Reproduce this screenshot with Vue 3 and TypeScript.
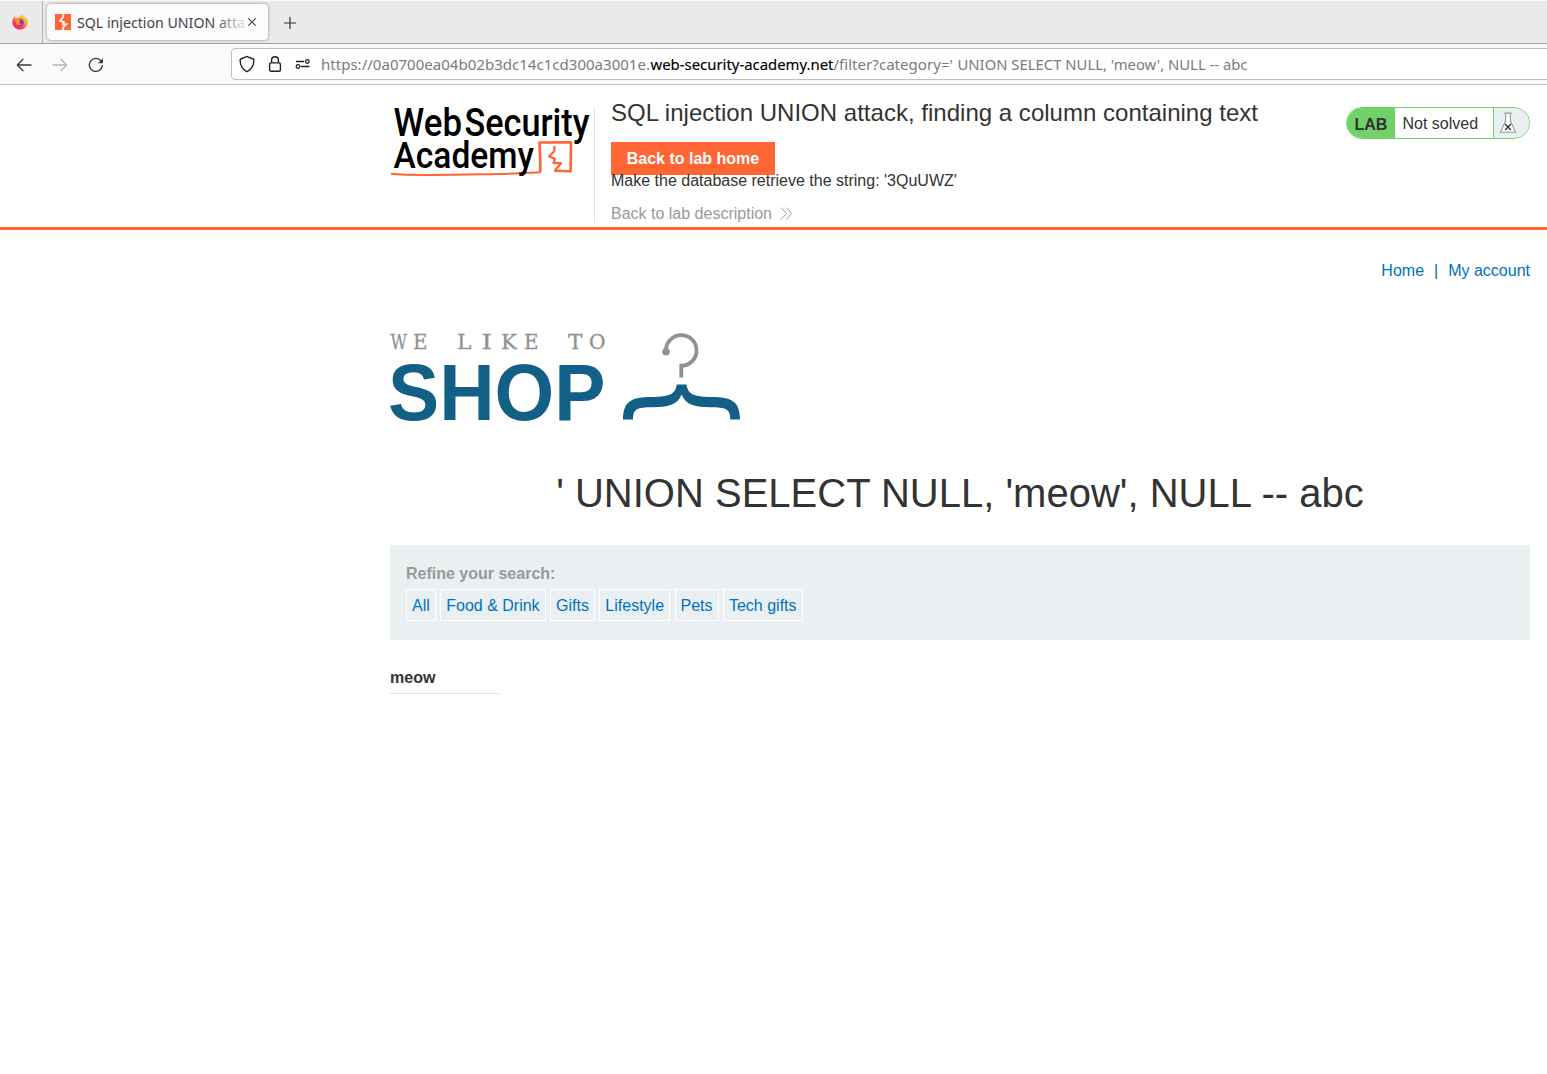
<script setup lang="ts">
interface Glyph { ch: string; x: number; w: number }

const categories: string[] = ['All', 'Food & Drink', 'Gifts', 'Lifestyle', 'Pets', 'Tech gifts']
const payload = "' UNION SELECT NULL, 'meow', NULL -- abc"
const tagline: Glyph[] = [
  { ch: 'W', x: 0.5, w: 16.5 },
  { ch: 'E', x: 23, w: 14.5 },
  { ch: 'L', x: 67, w: 14.5 },
  { ch: 'I', x: 91.5, w: 10.5 },
  { ch: 'K', x: 111, w: 16 },
  { ch: 'E', x: 134, w: 14.5 },
  { ch: 'T', x: 178, w: 14.5 },
  { ch: 'O', x: 199, w: 16.5 },
]
</script>

<template>
  <div class="window">
    <div class="tabbar">
      <div class="pinned">
        <svg width="16" height="16" viewBox="0 0 16 16">
          <defs>
            <linearGradient id="fox" x1="0.85" y1="0.05" x2="0.2" y2="0.95">
              <stop offset="0" stop-color="#ffe53b" />
              <stop offset="0.4" stop-color="#ff9a2b" />
              <stop offset="0.7" stop-color="#ff4050" />
              <stop offset="1" stop-color="#e6238c" />
            </linearGradient>
          </defs>
          <path d="M10.3.2c.2 1.3 1 2.200 1.700 2.900C13.200 3.700 13.500 3 13.500 3c1.500 1.600 2.300 3.500 2.200 5.500a7.700 7.200 0 0 1-15.400 0C.2 6.600.8 5 1.700 4l.4-1.800L4 4.200c.8-.4 2-.4 2.600-.2C7.500 2.500 8.900 1.100 10.300.2z" fill="url(#fox)" />
          <circle cx="8.200" cy="8.500" r="3.500" fill="#7a35d8" />
          <path d="M3.200 5.200c1.600-.8 3.500-.5 4.500.7.900.2 1.400.4 1.300.9-.3.800-1.500.9-2 1.500.1 1.300 1.700 1.900 3 1.300-1 1.900-4.600 2.200-6-.2z" fill="#ff8a22" />
        </svg>
      </div>
      <div class="tab">
        <svg class="favicon" width="16" height="16" viewBox="0 0 16 16">
          <rect width="16" height="16" fill="#ff6633" />
          <path d="M8.400 0 8 3.200 5 6.900 9 8.100 8 10.300 11.300 10.200 8 13.600V16" fill="none" stroke="#fff" stroke-width="1.700" />
        </svg>
        <svg class="tabtitle" width="170" height="24" viewBox="0 0 170 24">
          <defs>
            <linearGradient id="fade" x1="0" x2="1">
              <stop offset="0.81" stop-color="#3f3f46" />
              <stop offset="1" stop-color="#3f3f46" stop-opacity="0.12" />
            </linearGradient>
          </defs>
          <text x="0" y="17" textLength="168" lengthAdjust="spacingAndGlyphs" fill="url(#fade)">SQL injection UNION atta</text>
        </svg>
        <svg class="close" width="8" height="8" viewBox="0 0 8 8"><path d="M.3.3l7.400 7.400M7.700.3L.3 7.700" stroke="#444" stroke-width="1.100" /></svg>
      </div>
      <svg class="plus" width="12" height="12" viewBox="0 0 12 12"><path d="M6 0v12M0 6h12" stroke="#333" stroke-width="1.200" /></svg>
    </div>

    <div class="toolbar">
      <svg width="16" height="16" viewBox="0 0 16 16" class="nav"><path d="M15 8H1.500M7 2.300 1.300 8 7 13.700" fill="none" stroke="#3b3b3f" stroke-width="1.300" stroke-linecap="round" stroke-linejoin="round" /></svg>
      <svg width="16" height="16" viewBox="0 0 16 16" class="nav"><path d="M1 8h13.500M9 2.300 14.700 8 9 13.700" fill="none" stroke="#b5b5b8" stroke-width="1.300" stroke-linecap="round" stroke-linejoin="round" /></svg>
      <svg width="16" height="16" viewBox="0 0 16 16" class="nav"><path d="M14.300 8.600A6.500 6.500 0 1 1 12.600 3.500" fill="none" stroke="#3b3b3f" stroke-width="1.300" stroke-linecap="round" /><path d="M15 1.200V6.300H9.900z" fill="#3b3b3f" /></svg>
      <div class="urlbox">
        <svg width="16" height="18" viewBox="0 0 16 18"><path d="M8 1.500c.4 0 .7.100 1 .3L14.200 4c.5.200.7.600.7 1.100-.1 4.500-1.700 8.900-6.300 11.200-.4.200-.8.200-1.200 0C2.800 14 1.200 9.600 1.100 5.100c0-.5.200-.9.700-1.100L7 1.800c.3-.2.600-.3 1-.3z" fill="none" stroke="#222226" stroke-width="1.400" /></svg>
        <svg width="14" height="18" viewBox="0 0 14 18"><rect x="1.600" y="7.900" width="10.800" height="8.300" rx="1.500" fill="none" stroke="#222226" stroke-width="1.400" /><path d="M3.600 7.800V5.200a3.400 3.400 0 0 1 6.800 0v2.600" fill="none" stroke="#222226" stroke-width="1.400" /></svg>
        <svg width="16" height="12" viewBox="0 0 16 12"><g fill="none" stroke="#222226" stroke-width="1.300"><path d="M1 3.500h8M6 8.500h8.500" /><circle cx="12.300" cy="3.500" r="1.800" /><circle cx="3" cy="8.500" r="1.800" /></g></svg>
        <svg class="address" width="930" height="24" viewBox="0 0 930 24">
          <text x="0" y="18" textLength="329" lengthAdjust="spacingAndGlyphs" fill="#7b7b7b">https://0a0700ea04b02b3dc14c1cd300a3001e.</text>
          <text x="329.500" y="18" textLength="183" lengthAdjust="spacingAndGlyphs" fill="#000" stroke="#000" stroke-width=".15">web-security-academy.net</text>
          <text x="512.500" y="18" textLength="119.500" lengthAdjust="spacingAndGlyphs" fill="#7b7b7b">/filter?category='</text>
          <text x="636.500" y="18" textLength="290" lengthAdjust="spacingAndGlyphs" fill="#7b7b7b">UNION SELECT NULL, 'meow', NULL -- abc</text>
        </svg>
      </div>
    </div>

    <header class="lab">
      <svg class="academy" width="204" height="80" viewBox="0 0 204 80">
        <g font-size="38" font-weight="500" fill="#000">
          <text x="3.500" y="36" textLength="68.500" lengthAdjust="spacingAndGlyphs">Web</text>
          <text x="74.500" y="36" textLength="125" lengthAdjust="spacingAndGlyphs">Security</text>
        </g>
        <g fill="none" stroke="#ff6633" stroke-linejoin="round">
          <path d="M1 73.800C20 76 60 75 100 74.200S138 72.500 150.500 72.300" stroke-width="2" />
          <path d="M150.300 72.500C150.500 62 150 52 149.400 42.500L181 42.300 180.600 71.200 164 70.800" stroke-width="2.600" />
          <path d="M164.500 46 164.300 51.300 159 56.500 165 58.700 163.500 63.200 171 63.200 164.500 70.800" stroke-width="2.200" />
        </g>
        <text x="3.500" y="68" font-size="37.500" font-weight="500" textLength="140.500" lengthAdjust="spacingAndGlyphs">Academy</text>
      </svg>
      <div class="intro">
        <h2>SQL injection UNION attack, finding a column containing text</h2>
        <a class="home">Back to lab home</a>
        <p>Make the database retrieve the string: '3QuUWZ'</p>
        <a class="desc">Back to lab description
          <svg width="13" height="14" viewBox="0 0 13 14"><path d="M1 .5l5.500 6L1 12.500M6.300.5l5.500 6-5.500 6" fill="none" stroke="#999" stroke-width="1" /></svg>
        </a>
      </div>
      <div class="status">
        <b>LAB</b>
        <span>Not solved</span>
        <i>
          <svg width="18" height="22" viewBox="0 0 18 22"><path d="M6.600 1.500V9L1.500 20.300h15L11.400 9V1.500" fill="#fff" stroke="#999" stroke-width="1.100" /><path d="M5.200 1.200h7.600" stroke="#999" stroke-width="1.300" /><path d="M6.100 12l5.800 6M11.900 12l-5.800 6" stroke="#333" stroke-width="1.400" /></svg>
        </i>
      </div>
    </header>

    <main>
      <nav><a>Home</a><span>|</span><a>My account</a></nav>
      <svg class="shop" width="356" height="100" viewBox="-4 0 356 100">
        <text v-for="g in tagline" :key="g.x" class="typewriter" :x="g.x" y="23.500" :textLength="g.w" lengthAdjust="spacingAndGlyphs">{{ g.ch }}</text>
        <text class="wordmark" x="-2" y="94.500" textLength="217.500" lengthAdjust="spacingAndGlyphs">SHOP</text>
        <path d="M276 26.500a15.300 15.300 0 1 1 15.300 14.200V52.500" fill="none" stroke="#919191" stroke-width="3.800" />
        <circle cx="276" cy="26.800" r="3.800" fill="#919191" />
        <path d="M286.700 59.500H296.500C298 69.500 304 71.800 322 72C341 72.200 350 76 350 94.500H340.300C340.500 84 336 82.200 320 82.200C306 82.200 295.500 80 291.600 69.500C287.500 80 277.500 82.200 263 82.200C247 82.200 243 84 243 94.500H233C233 76 242 72.200 261 72C279 71.800 285.500 69.500 286.700 59.500z" fill="#136086" />
      </svg>
      <h1>{{ payload }}</h1>
      <section class="filters">
        <label>Refine your search:</label>
        <div class="links"><a v-for="c in categories" :key="c">{{ c }}</a></div>
      </section>
      <table><tbody><tr><th>meow</th></tr></tbody></table>
    </main>
  </div>
</template>

<style>
body { margin: 0; background: #fff; }
</style>

<style scoped>
* { box-sizing: border-box; }
.window { width: 1547px; height: 1074px; overflow: hidden; background: #fff; color: #333332; font: 16px/20px "Liberation Sans", Arial, sans-serif; }
svg { display: block; flex: none; }
.tabbar { display: flex; height: 44px; background: #eaeaea; border-top: 1px solid #fafafa; border-bottom: 1px solid #a0a0a0; }
.pinned { width: 43px; height: 42px; padding: 13px 0 0 12px; border-right: 1px solid #b0b0b0; }
.tab { display: flex; align-items: center; width: 221px; height: 36px; margin: 3px 0 0 4px; padding-left: 8px; background: #fcfcfc; border-radius: 4px; box-shadow: 0 0 3px rgba(0, 0, 0, .45); }
.tabtitle { margin: 2px 0 0 5.500px; }
.tabtitle text, .address text { font: 14.700px "Noto Sans", "Open Sans", sans-serif; }
.close { margin-left: 1.500px; }
.plus { margin: 16px 0 0 16px; }
.toolbar { display: flex; align-items: center; height: 41px; padding-left: 16px; background: #fbfbfb; border-bottom: 1px solid #c4c4c4; }
.nav { margin: 1px 20px 0 0; }
.urlbox { display: flex; align-items: center; flex: none; width: 1330px; height: 32px; margin-left: 107px; padding-left: 7px; background: #fff; border: 1px solid #c0c0c0; border-radius: 4px; }
.urlbox svg + svg { margin-left: 13px; }
.urlbox svg + svg.address { margin-left: 10px; }
.lab { display: flex; height: 145px; padding: 13px 17px 0 390px; border-bottom: 3px solid #ff6633; }
.academy { margin-top: 2px; font-family: Roboto, sans-serif; }
.intro { position: relative; width: 735px; padding-left: 17px; }
.intro::before { content: ""; position: absolute; left: 0; top: 9px; height: 116px; border-left: 1px solid #e2e2e2; }
h2 { margin: 0; padding-top: 1px; font-size: 24px; line-height: 28px; font-weight: 400; white-space: nowrap; letter-spacing: .015px; }
.home { display: block; width: 164px; height: 33px; margin-top: 15px; background: #ff6633; color: #fff; font-weight: 700; line-height: 33px; text-align: center; }
p { position: relative; margin: -4px 0 0; line-height: 20px; }
.desc { display: flex; align-items: center; margin-top: 13px; color: #999; }
.desc svg { margin-left: 8px; }
.status { display: flex; flex: none; width: 184px; height: 32px; margin: 9px 0 0 auto; border: 1px solid #70d169; border-radius: 16px; overflow: hidden; line-height: 31px; }
.status b { width: 48px; padding-left: 7.500px; background: #70d169; line-height: 33px; }
.status span { width: 98px; padding-left: 7.500px; }
.status i { flex: 1; padding: 4px 0 0 5px; background: #eaf0f2; border-left: 1px solid #70d169; }
main { width: 1140px; margin-left: 390px; }
nav { display: flex; justify-content: flex-end; padding-top: 31px; color: #0071bd; }
nav span { margin: 0 10px; color: #136086; }
.shop { margin: 44px 0 0 -4px; }
.typewriter { font: 21px "DejaVu Serif", serif; fill: #919191; stroke: #919191; stroke-width: .3px; }
.wordmark { font: bold 80.500px "Liberation Sans", Arial, sans-serif; fill: #136086; }
h1 { margin: 44px 0 0; font-size: 40px; line-height: 48px; font-weight: 400; text-align: center; }
.filters { height: 95px; margin-top: 28px; padding: 19px 16px 0; background: #eaf0f2; }
label { display: block; color: #999; font-weight: 700; line-height: 20px; }
.links { display: flex; gap: 4.450px; margin-top: 5px; }
.links a { height: 32px; padding: 0 5px; border: 1px solid #fff; color: #0071bd; line-height: 31px; }
table { width: 110px; margin-top: 27px; border-collapse: separate; border-spacing: 0; }
th { height: 27px; padding: 1px 0 5px; border-bottom: 1px solid #e2e2e2; text-align: left; line-height: 20px; }
</style>
